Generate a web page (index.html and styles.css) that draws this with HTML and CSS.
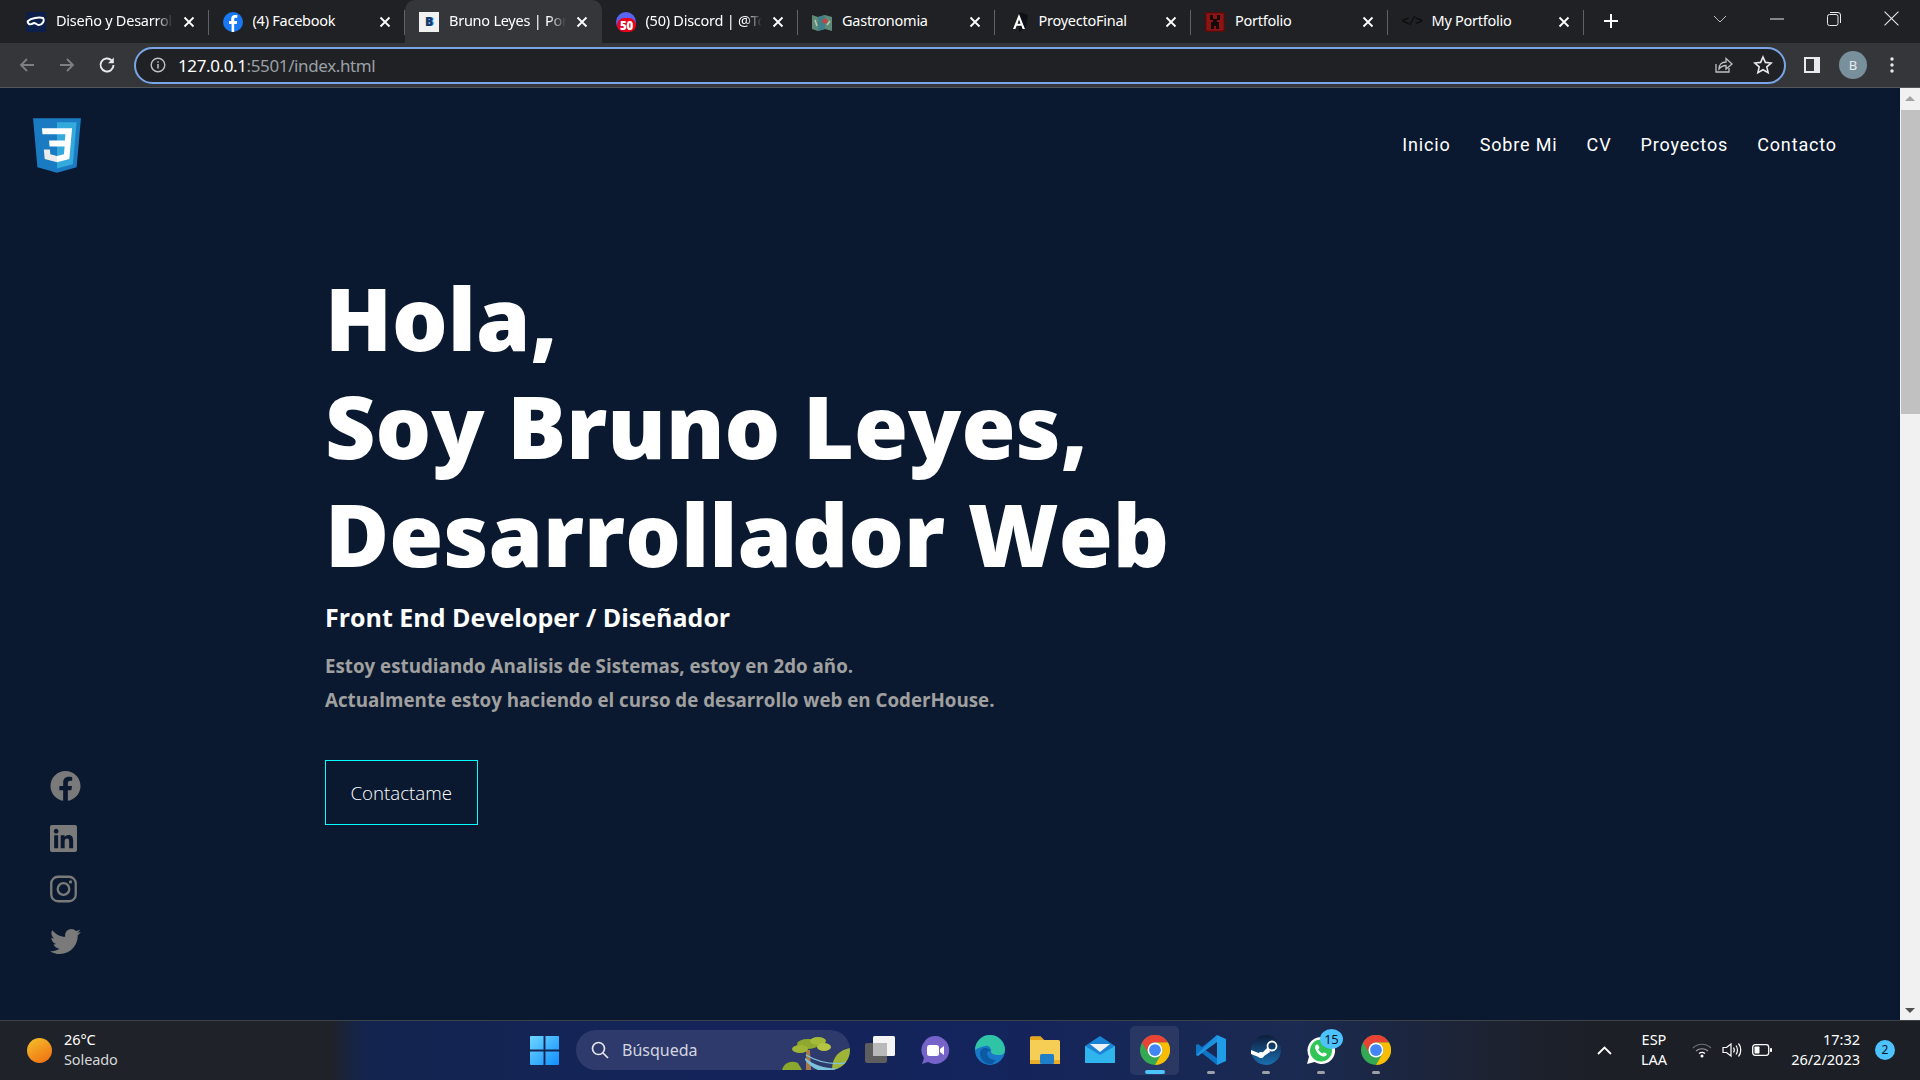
FILE: index.html
```html
<!DOCTYPE html>
<html lang="es">
<head>
<meta charset="utf-8">
<title>Bruno Leyes | Portfolio</title>
<link rel="stylesheet" href="styles.css">
</head>
<body>
<svg class="defs" width="0" height="0" aria-hidden="true">
  <symbol id="x" viewBox="0 0 12 12"><path d="M1.5 1.5l9 9M10.5 1.5l-9 9" stroke="#fff" stroke-width="1.8" fill="none"/></symbol>
  <symbol id="chrome" viewBox="0 0 48 48">
    <circle cx="24" cy="24" r="24" fill="#34a853"/>
    <path d="M3.2 12A24 24 0 0 1 44.8 12H24a12 12 0 0 0-10.4 18z" fill="#ea4335"/>
    <path d="M44.8 12H24a12 12 0 0 1 10.4 18L24 48A24 24 0 0 0 44.8 12z" fill="#fbbc04"/>
    <circle cx="24" cy="24" r="12" fill="#fff"/><circle cx="24" cy="24" r="9.4" fill="#4285f4"/>
  </symbol>
</svg>

<div class="tabstrip">
  <div class="tab">
    <svg class="fav" viewBox="0 0 20 20"><rect width="20" height="20" fill="#0c1f4a"/><path d="M2 9c3-3 11-4 15-3 2 3-1 7-4 7-2 0-3-2-5-2-2 1-4 2-5 1-1-1-2-2-1-3z" fill="none" stroke="#fff" stroke-width="2"/></svg>
    <span class="tab-title fade">Diseño y Desarrollo Web</span>
    <svg class="tab-x"><use href="#x"/></svg>
  </div>
  <div class="tab">
    <svg class="fav" viewBox="0 0 20 20"><circle cx="10" cy="10" r="10" fill="#1877f2"/><path d="M11.2 20v-8h2.6l.4-3h-3V7.3c0-.9.3-1.5 1.500-1.500h1.600V3.100c-.3 0-1.200-.1-2.300-.1-2.300 0-3.800 1.400-3.800 3.900V9H6v3h2.600v8z" fill="#fff"/></svg>
    <span class="tab-title">(4) Facebook</span>
    <svg class="tab-x"><use href="#x"/></svg>
  </div>
  <div class="tab active">
    <span class="fav fav-b">B</span>
    <span class="tab-title fade">Bruno Leyes | Portfolio</span>
    <svg class="tab-x"><use href="#x"/></svg>
  </div>
  <div class="tab">
    <svg class="fav" viewBox="0 0 20 20"><circle cx="10" cy="10" r="10" fill="#5865f2"/><rect x="1" y="6" width="19" height="14" rx="7" fill="#e8001c"/><text x="10.500" y="17.500" class="fav-num">50</text></svg>
    <span class="tab-title fade">(50) Discord | @Tomas</span>
    <svg class="tab-x"><use href="#x"/></svg>
  </div>
  <div class="tab">
    <svg class="fav" viewBox="0 0 20 20"><path d="M0 3l6 2 7-2 7 2v14l-7-2-7 2-6-2z" fill="#5e8a7a"/><path d="M6 5l7-2v14l-7 2z" fill="#3f7f8a"/><circle cx="13" cy="9" r="2.500" fill="#c8433f"/><path d="M3 8l2 6M15 13l3-4" stroke="#b9c6b0" stroke-width="1.500"/></svg>
    <span class="tab-title">Gastronomia</span>
    <svg class="tab-x"><use href="#x"/></svg>
  </div>
  <div class="tab">
    <svg class="fav" viewBox="0 0 20 20"><path d="M10 0l9 3-2 13-7 4z" fill="#0d1016"/><path d="M10 2l-6 15h2.400l1.200-3.200h4.800l1.200 3.200H16zM8.500 11.700L10 7.500l1.500 4.200z" fill="#fff"/></svg>
    <span class="tab-title">ProyectoFinal</span>
    <svg class="tab-x"><use href="#x"/></svg>
  </div>
  <div class="tab">
    <svg class="fav" viewBox="0 0 20 20"><rect width="20" height="20" fill="#8e1414"/><rect x=".8" y=".8" width="18.400" height="18.400" fill="none" stroke="#3a0a0a"/><path d="M5 3h3v4h4V3h3v5h-3v2h2v7h-3v-3H9v3H6v-7h2V8H5z" fill="#14090a"/></svg>
    <span class="tab-title">Portfolio</span>
    <svg class="tab-x"><use href="#x"/></svg>
  </div>
  <div class="tab last">
    <span class="fav fav-code">&lt;/&gt;</span>
    <span class="tab-title">My Portfolio</span>
    <svg class="tab-x"><use href="#x"/></svg>
  </div>
  <svg class="newtab" viewBox="0 0 16 16"><path d="M8 1v14M1 8h14" stroke="#fff" stroke-width="2"/></svg>
  <div class="winctl">
    <svg class="ctl-chev" viewBox="0 0 14 8"><path d="M1 1l6 6 6-6" fill="none" stroke="#bdc1c6"/></svg>
    <svg class="ctl-min" viewBox="0 0 14 2"><path d="M0 1h14" stroke="#e8eaed"/></svg>
    <svg class="ctl-res" viewBox="0 0 14 14"><rect x=".5" y="2.500" width="10.500" height="11" rx="2" fill="none" stroke="#e8eaed"/><path d="M3 .5h8a2.500 2.500 0 0 1 2.500 2.500v8" fill="none" stroke="#e8eaed"/></svg>
    <svg class="ctl-close" viewBox="0 0 14 14"><path d="M.5.5l13 13M13.500.5l-13 13" stroke="#e8eaed"/></svg>
  </div>
</div>

<div class="toolbar">
  <svg class="tb-ic" viewBox="0 0 18 18"><path d="M16 9H3M9 3L3 9l6 6" fill="none" stroke="#7c7f83" stroke-width="1.800"/></svg>
  <svg class="tb-ic" viewBox="0 0 18 18"><path d="M2 9h13M9 3l6 6-6 6" fill="none" stroke="#7c7f83" stroke-width="1.800"/></svg>
  <svg class="tb-ic" viewBox="0 0 18 18"><path d="M15.500 9A6.500 6.500 0 1 1 13.600 4.400" fill="none" stroke="#e8eaed" stroke-width="1.900"/><path d="M15.800 1.500v5.800H10z" fill="#e8eaed"/></svg>
  <div class="omnibox">
    <svg class="info" viewBox="0 0 16 16"><circle cx="8" cy="8" r="6.800" fill="none" stroke="#bdc1c6" stroke-width="1.400"/><path d="M8 7v4.500M8 4.300v1.400" stroke="#bdc1c6" stroke-width="1.500"/></svg>
    <span class="url"><span class="url-host">127.0.0.1</span>:5501/index.html</span>
    <svg class="omni-ic" viewBox="0 0 20 20"><path d="M3 9v8h13v-4" fill="none" stroke="#bdc1c6" stroke-width="1.300"/><path d="M6 14c0-5 3-7 7-7V3.500L19 9l-6 5v-3.500c-3 0-5 1-7 3.500z" fill="none" stroke="#bdc1c6" stroke-width="1.300"/></svg>
    <svg class="omni-ic" viewBox="0 0 20 20"><path d="M10 2l2.400 5.400 5.800.6-4.400 3.900 1.300 5.700L10 14.700l-5.100 2.900 1.300-5.700L1.800 8l5.800-.6z" fill="none" stroke="#e8eaed" stroke-width="1.600"/></svg>
  </div>
  <svg class="panel" viewBox="0 0 18 18"><rect x="1" y="1" width="16" height="16" fill="#e8eaed"/><rect x="3" y="3" width="8" height="12" fill="#35363a"/></svg>
  <span class="avatar">B</span>
  <svg class="kebab" viewBox="0 0 4 16"><circle cx="2" cy="2" r="1.700" fill="#e8eaed"/><circle cx="2" cy="8" r="1.700" fill="#e8eaed"/><circle cx="2" cy="14" r="1.700" fill="#e8eaed"/></svg>
</div>

<div class="viewport">
  <main class="page">
    <header class="site-header">
      <svg class="logo" viewBox="30 0 452 512">
        <polygon fill="#1a7bc2" points="71.357,460.819 30.272,0 481.728,0 440.643,460.74 255.724,512"/>
        <polygon fill="#33A9DC" points="256,472.816 405.419,431.396 440.574,37.584 256,37.584"/>
        <polygon fill="#fff" points="114.25,94.42 256,94.42 256,150.948 119.300,150.948"/>
        <polygon fill="#fff" points="181.2,208.832 256,208.832 256,265.36 186.300,265.36"/>
        <polygon fill="#EBEBEB" points="256.288,355.592 256.04,355.66 193.1,338.664 189.076,293.588 158.492,293.588 132.344,293.588 140.26,382.328 256.028,414.468 256.288,414.396"/>
        <polygon fill="#fff" points="327.876,265.36 321.316,338.628 256.276,355.58 256.276,414.392 372.14,382.328 386.072,226.688 387.436,211.412 397.632,94.42 256,94.42 256,150.948 335.58,150.948 330.4,208.832 256,208.832 256,265.36"/>
      </svg>
      <nav class="nav">
        <a>Inicio</a><a>Sobre Mi</a><a>CV</a><a>Proyectos</a><a>Contacto</a>
      </nav>
    </header>

    <section class="hero">
      <h1>Hola,<br>Soy Bruno Leyes,<br>Desarrollador Web</h1>
      <h3>Front End Developer / Diseñador</h3>
      <p>Estoy estudiando Analisis de Sistemas, estoy en 2do año.<br>Actualmente estoy haciendo el curso de desarrollo web en CoderHouse.</p>
      <a class="cta">Contactame</a>
    </section>

    <aside class="socials">
      <svg class="s-fb" viewBox="8 8 496 496"><path fill="#7a7a7a" d="M504 256C504 119 393 8 256 8S8 119 8 256c0 123.780 90.690 226.380 209.250 245V327.690h-63V256h63v-54.640c0-62.150 37-96.480 93.670-96.480 27.140 0 55.520 4.840 55.520 4.840v61h-31.280c-30.800 0-40.410 19.120-40.410 38.730V256h68.780l-11 71.690h-57.780V501C413.310 482.380 504 379.780 504 256z"/></svg>
      <svg class="s-in" viewBox="0 32 448 448"><path fill="#7a7a7a" d="M416 32H31.900C14.300 32 0 46.500 0 64.300v383.400C0 465.500 14.300 480 31.900 480H416c17.600 0 32-14.500 32-32.300V64.300c0-17.800-14.400-32.300-32-32.300zM135.400 416H69V202.200h66.500V416zm-33.200-243c-21.300 0-38.500-17.300-38.500-38.500S80.900 96 102.200 96c21.200 0 38.500 17.300 38.500 38.500 0 21.300-17.200 38.500-38.500 38.500zm282.100 243h-66.400V312c0-24.800-.5-56.700-34.500-56.700-34.600 0-39.900 27-39.900 54.900V416h-66.400V202.200h63.700v29.200h.9c8.900-16.800 30.600-34.500 62.900-34.500 67.200 0 79.700 44.300 79.700 101.900V416z"/></svg>
      <svg class="s-ig" viewBox="0 0 28 28"><rect x="1.300" y="1.300" width="25.400" height="25.400" rx="7" fill="none" stroke="#7a7a7a" stroke-width="2.400"/><circle cx="14" cy="14" r="6" fill="none" stroke="#7a7a7a" stroke-width="2.400"/><circle cx="21.300" cy="6.700" r="1.700" fill="#7a7a7a"/></svg>
      <svg class="s-tw" viewBox="0 48 512 416"><path fill="#7a7a7a" d="M459.370 151.716c.325 4.548.325 9.097.325 13.645 0 138.720-105.583 298.558-298.558 298.558-59.452 0-114.680-17.219-161.137-47.106 8.447.974 16.568 1.299 25.340 1.299 49.055 0 94.213-16.568 130.274-44.832-46.132-.975-84.792-31.188-98.112-72.772 6.498.974 12.995 1.624 19.818 1.624 9.421 0 18.843-1.300 27.614-3.573-48.081-9.747-84.143-51.980-84.143-102.985v-1.299c13.969 7.797 30.214 12.670 47.431 13.319-28.264-18.843-46.781-51.005-46.781-87.391 0-19.492 5.197-37.360 14.294-52.954 51.655 63.675 129.300 105.258 216.365 109.807-1.624-7.797-2.599-15.918-2.599-24.040 0-57.828 46.782-104.934 104.934-104.934 30.213 0 57.502 12.670 76.670 33.137 23.715-4.548 46.456-13.320 66.599-25.340-7.798 24.366-24.366 44.833-46.132 57.827 21.117-2.273 41.584-8.122 60.426-16.243-14.292 20.791-32.161 39.308-52.628 54.253z"/></svg>
    </aside>
  </main>
  <div class="scrollbar">
    <div class="sb-btn"><span class="arrow-up"></span></div>
    <div class="sb-track"><div class="sb-thumb"></div></div>
    <div class="sb-btn"><span class="arrow-down"></span></div>
  </div>
</div>

<footer class="taskbar">
  <div class="weather">
    <span class="sun"></span>
    <div class="weather-text"><span>26°C</span><span class="dim">Soleado</span></div>
  </div>
  <div class="apps">
    <svg class="start" viewBox="0 0 30 30"><defs><linearGradient id="w" x1="0" y1="0" x2="1" y2="1"><stop offset="0" stop-color="#6fd6ff"/><stop offset="1" stop-color="#0f8fff"/></linearGradient></defs><path fill="url(#w)" d="M0 1a1 1 0 0 1 1-1h13v14H0zM16 0h13a1 1 0 0 1 1 1v13H16zM0 16h14v14H1a1 1 0 0 1-1-1zM16 16h14v13a1 1 0 0 1-1 1H16z"/></svg>
    <div class="search">
      <svg class="search-ic" viewBox="0 0 18 18"><circle cx="7.500" cy="7.500" r="6" fill="none" stroke="#e4e6ee" stroke-width="1.700"/><path d="M12 12l5 5" stroke="#e4e6ee" stroke-width="1.700"/></svg>
      <span class="search-text">Búsqueda</span>
      <svg class="search-art" viewBox="0 0 68 34">
        <path d="M0 34c2-8 10-10 16-7l4 7z" fill="#8aa72e"/><path d="M50 34c0-14 8-20 18-22v22z" fill="#9db438"/>
        <path d="M24 14h4l1 20h-5z" fill="#a6794f"/>
        <ellipse cx="26" cy="8" rx="11" ry="5" fill="#8fa82f"/><ellipse cx="36" cy="5" rx="8" ry="4" fill="#a6ba3a"/><ellipse cx="42" cy="11" rx="7" ry="4" fill="#b6c443"/><ellipse cx="18" cy="13" rx="8" ry="4" fill="#a0b535"/>
        <path d="M23 22c10 8 24 12 40 10v2H36c-5-2-10-6-13-10z" fill="#7ec3dc"/><path d="M24 19c10 6 24 10 40 8" fill="none" stroke="#7ec3dc" stroke-width="1.300"/>
      </svg>
    </div>
    <svg class="app" viewBox="0 0 30 30"><rect x="0" y="8" width="22" height="20" rx="2" fill="#5e5e5e"/><rect x="8" y="1" width="22" height="20" rx="1.500" fill="#f4f4f4"/><rect x="8" y="8" width="14" height="13" fill="#b9b9b9"/></svg>
    <svg class="app" viewBox="0 0 30 30"><path d="M15 1a14 14 0 1 1-7 26l-6 2 2-6A14 14 0 0 1 15 1z" fill="#7563c9"/><rect x="7" y="10" width="12" height="11" rx="2.500" fill="#fff"/><path d="M20 14l4-3v9l-4-3z" fill="#fff"/></svg>
    <svg class="app" viewBox="0 0 30 30"><circle cx="15" cy="15" r="15" fill="#1a78c9"/><path d="M0 15A15 15 0 0 1 30 15c0 3-2 5-6 5-5 0-8-1-8-4 0-4-3-6-6-5-4 1-8 2-10 4z" fill="#2fc4a6"/><path d="M12 18c0 5 5 7 9 7l-4 4C10 30 5 24 5 18c0-3 3-5 5-5 3 0 6 2 6 3-2 0-4 0-4 2z" fill="#0c59a4"/></svg>
    <svg class="app" viewBox="0 0 30 30"><path d="M0 3a1.500 1.500 0 0 1 1.500-1.500h9L14 5h14.500A1.500 1.500 0 0 1 30 6.500V28a1 1 0 0 1-1 1H1a1 1 0 0 1-1-1z" fill="#f6ce55"/><path d="M0 3a1.500 1.500 0 0 1 1.500-1.500h9L14 5H0z" fill="#e5a51c"/><rect x="0" y="25" width="30" height="4" fill="#e8ad2a"/><rect x="10" y="19" width="14" height="10" rx="1.500" fill="#1f7fc9"/></svg>
    <svg class="app" viewBox="0 0 30 30"><path d="M0 11L15 1l15 10v17H0z" fill="#1a83d6"/><path d="M0 11l15 9 15-9v17H0z" fill="#2fb4ee"/><path d="M5 9h20l-10 8z" fill="#eef2f6"/></svg>
    <div class="app-active">
      <svg class="app"><use href="#chrome"/></svg>
      <span class="run-bar"></span>
    </div>
    <div class="app-slot">
      <svg class="app" viewBox="0 0 30 30"><path d="M21 0l9 4v22l-9 4z" fill="#1f9be8"/><path d="M21 0v7L9.500 15 21 23v7L6 18l-4 3-2-1v-10l2-1 4 3z" fill="#0e74c5"/><path d="M21 7L2 21 0 20l21-20z" fill="#2aa3ef" opacity=".6"/></svg>
      <span class="run-dot"></span>
    </div>
    <div class="app-slot">
      <svg class="app" viewBox="0 0 30 30"><defs><linearGradient id="st" x1="0" y1="0" x2="0" y2="1"><stop offset="0" stop-color="#0e1c3a"/><stop offset="1" stop-color="#1a6fb0"/></linearGradient></defs><circle cx="15" cy="15" r="15" fill="url(#st)"/><circle cx="21" cy="11" r="4.500" fill="none" stroke="#fff" stroke-width="1.800"/><circle cx="10" cy="20" r="3" fill="#fff"/><path d="M0 15l10 4 7-7 2 5-9 6-10-4z" fill="#fff"/></svg>
      <span class="run-dot"></span>
    </div>
    <div class="app-slot">
      <svg class="app" viewBox="0 0 30 30"><path d="M15 2a13.500 13.500 0 1 1-6.500 25L1 29l2-7.300A13.500 13.500 0 0 1 15 2z" fill="#fff"/><circle cx="15" cy="15.500" r="11" fill="#31c557"/><path d="M10.500 9.500c-1.500 1-2 3-.5 6 1.500 3 4.500 5.500 7 6 2 .4 3.500-1 4-2.500l-3-1.800-1.500 1.400c-2-.8-3.500-2.500-4.300-4.300l1.400-1.400-1.500-3.200z" fill="#fff"/></svg>
      <span class="badge-15">15</span>
      <span class="run-dot"></span>
    </div>
    <div class="app-slot">
      <svg class="app"><use href="#chrome"/></svg>
      <span class="run-dot"></span>
    </div>
  </div>
  <div class="tray">
    <svg class="tray-chev" viewBox="0 0 15 9"><path d="M1 8l6.500-6.500L14 8" fill="none" stroke="#fff" stroke-width="1.800"/></svg>
    <div class="lang"><span>ESP</span><span>LAA</span></div>
    <svg class="tray-ic" viewBox="0 0 20 16"><path d="M1 6c5-5 13-5 18 0" fill="none" stroke="#6d7076" stroke-width="1.200"/><path d="M4 9c3.500-3 8.500-3 12 0" fill="none" stroke="#9a9da3" stroke-width="1.200"/><path d="M7 11.500c2-1.500 4-1.500 6 0" fill="none" stroke="#fff" stroke-width="1.400"/><circle cx="10" cy="14" r="1.500" fill="#fff"/></svg>
    <svg class="tray-ic" viewBox="0 0 20 16"><path d="M1 5.500h3.500L9 2v12L4.500 10.500H1z" fill="none" stroke="#fff" stroke-width="1.200"/><path d="M11.500 5.500c1 1.500 1 3.500 0 5M14 3.500c2 2.500 2 6.500 0 9M16.500 1.500c3 3.500 3 9.500 0 13" fill="none" stroke="#fff" stroke-width="1.200"/></svg>
    <svg class="tray-ic" viewBox="0 0 20 14"><rect x=".7" y="1.700" width="16" height="10.600" rx="2.500" fill="none" stroke="#fff" stroke-width="1.300"/><rect x="2.500" y="3.500" width="5" height="7" rx=".8" fill="#fff"/><rect x="18" y="5" width="2" height="4" rx=".8" fill="#fff"/></svg>
    <div class="clock"><span>17:32</span><span>26/2/2023</span></div>
    <span class="notif">2</span>
  </div>
</footer>
</body>
</html>
```

FILE: styles.css
```css
* { box-sizing: border-box; }
html, body { margin: 0; height: 100%; }
body {
  width: 1920px; height: 1080px; overflow: hidden;
  display: flex; flex-direction: column;
  background: #0a192f;
  font-family: "Open Sans", "Noto Sans", sans-serif;
}
.defs { position: absolute; }

/* Browser tabs */
.tabstrip { height: 43px; flex: none; display: flex; align-items: stretch; padding-left: 12px; background: #202124; color: #fff; }
.tab { width: 196.5px; height: 43px; display: flex; align-items: center; padding: 0 14px 4px 14px; position: relative; font: 14.5px "Noto Sans", sans-serif; letter-spacing: -.25px; }
.tab::after { content: ""; position: absolute; right: 0; top: 10px; height: 25px; width: 1px; background: #5f6368; }
.tab.active { background: #35363a; border-radius: 10px 10px 0 0; }
.tab.active::after { display: none; }
.tab .fav { position: relative; top: 2px; }
.fav { width: 20px; height: 20px; flex: none; margin-right: 10px; }
.fav-b { background: #f1f1f1; color: #14396b; font: 800 12px/20px "Open Sans", sans-serif; text-align: center; letter-spacing: 0; text-shadow: 1px 0 0 #3f8fd0; }
.fav-code { color: #0c0c0c; font: 700 13px/20px "Liberation Mono", monospace; letter-spacing: -1px; text-align: center; }
.fav-num { font: 800 11.5px "Open Sans", sans-serif; fill: #fff; text-anchor: middle; letter-spacing: -.3px; }
.tab-title { flex: 1; min-width: 0; white-space: nowrap; overflow: hidden; }
.fade { -webkit-mask-image: linear-gradient(to right, #000 85%, transparent); mask-image: linear-gradient(to right, #000 85%, transparent); }
.tab-x { width: 12px; height: 12px; flex: none; margin-left: 10px; position: relative; top: 2px; }
.newtab { width: 16px; height: 16px; margin: 13px 0 0 19px; flex: none; }
.winctl { flex: 1; position: relative; display: flex; align-items: flex-start; padding-left: 94px; }
.ctl-chev { width: 14px; height: 8px; margin-top: 15px; }
.ctl-min { width: 14px; height: 2px; margin: 18px 0 0 43px; }
.ctl-res { width: 14px; height: 14px; margin: 12px 0 0 43px; }
.ctl-close { width: 15px; height: 15px; margin: 11px 0 0 43px; }

/* Toolbar */
.toolbar { height: 45px; flex: none; display: flex; align-items: center; background: #35363a; border-bottom: 1px solid #55565a; padding-left: 18px; }
.tb-ic { width: 18px; height: 18px; margin-right: 22px; flex: none; }
.omnibox { width: 1652px; height: 37px; margin-left: -4px; flex: none; display: flex; align-items: center; background: #202124; border: 2.500px solid #7aa5e8; border-radius: 19px; padding-left: 14px; padding-right: 11px; }
.info { width: 16px; height: 16px; flex: none; }
.url { margin-left: 12px; flex: 1; font: 17px "Noto Sans", sans-serif; letter-spacing: -.38px; color: #9aa0a6; }
.url-host { color: #fff; }
.omni-ic { width: 20px; height: 20px; margin-left: 20px; flex: none; }
.panel { width: 18px; height: 18px; margin-left: 17px; flex: none; }
.avatar { width: 28px; height: 28px; margin-left: 18px; border-radius: 50%; background: #78909c; color: #e8eaed; font: 13px/28px "Noto Sans", sans-serif; text-align: center; flex: none; }
.kebab { width: 4px; height: 16px; margin-left: 23px; flex: none; }

/* Page */
.viewport { flex: 1; display: flex; min-height: 0; }
.page { flex: 1; position: relative; background: #0a192f; color: #fff; }
.site-header { display: flex; justify-content: space-between; align-items: center; padding: 30px 63px 0 33px; }
.logo { width: 48px; height: 55px; }
.nav { display: flex; gap: 29px; font: 400 18px "Roboto", sans-serif; letter-spacing: .85px; position: relative; top: -1px; }
.hero { padding: 90px 0 0 325px; }
.hero h1 { margin: 0; font: 800 87.5px/108px "Open Sans", sans-serif; }
.hero h3 { margin: 9px 0 0; font: 700 25px/42px "Open Sans", sans-serif; }
.hero p { margin: 11px 0 0; font: 700 18.75px/34px "Open Sans", sans-serif; color: #a0a0a0; }
.cta { display: inline-block; margin-top: 43px; padding: 0 24.5px; height: 65px; border: 1px solid #0ff; font: 300 18.7px/63px "Open Sans", sans-serif; color: #fff; }
.socials { position: absolute; left: 50px; top: 683px; width: 31px; display: flex; flex-direction: column; align-items: flex-start; }
.s-fb { width: 31px; height: 30px; }
.s-in { width: 27px; height: 27px; margin-top: 24px; }
.s-ig { width: 27px; height: 28px; margin-top: 23px; }
.s-tw { width: 31px; height: 25px; margin-top: 26px; }

/* Scrollbar */
.scrollbar { width: 20px; flex: none; background: #f1f1f1; display: flex; flex-direction: column; }
.sb-btn { height: 20px; display: flex; align-items: center; justify-content: center; flex: none; }
.arrow-up { border: 5px solid transparent; border-top: 0; border-bottom: 5px solid #a3a3a3; }
.arrow-down { border: 5px solid transparent; border-bottom: 0; border-top: 5px solid #505050; }
.sb-track { flex: 1; padding-left: 1px; }
.sb-thumb { height: 304px; margin-top: 2px; background: #c1c1c1; }

/* Taskbar */
.taskbar {
  height: 60px; flex: none; display: flex; align-items: center; color: #fff; padding-bottom: 1px;
  border-top: 1px solid #3d4148;
  background: linear-gradient(to right, #1f2228 0, #1f2228 330px, #13244f 365px, #14245a 700px, #14245c 1000px, #1a2a50 1300px, #1d2230 1500px, #1c1f26 1600px);
}
.weather { width: 530px; flex: none; padding-left: 27px; display: flex; align-items: center; }
.sun { width: 25px; height: 25px; border-radius: 50%; background: linear-gradient(150deg, #f4c22c, #f06a10); }
.weather-text { margin-left: 12px; display: flex; flex-direction: column; font: 14.5px/20px "Noto Sans", sans-serif; letter-spacing: -.1px; position: relative; top: -1px; }
.dim { color: #d5d7da; }
.apps { display: flex; align-items: center; }
.start { width: 29px; height: 29px; margin-right: 17px; }
.search { width: 274px; height: 40px; border-radius: 20px; background: #2e3a6b; display: flex; align-items: center; padding-left: 15px; position: relative; overflow: hidden; margin-right: 15px; }
.search-ic { width: 18px; height: 18px; }
.search-text { margin-left: 13px; font: 16px "Noto Sans", sans-serif; color: #d4d6e0; }
.search-art { position: absolute; right: 0; bottom: 0; width: 68px; height: 34px; }
.apps > .app { margin-right: 25.100px; }
.app { width: 30px; height: 30px; display: block; flex: none; }
.app-slot { position: relative; width: 30px; margin-right: 25.100px; }
.app-active { position: relative; width: 30px; margin-right: 25.100px; }
.app-active::before { content: ""; position: absolute; left: -10px; top: -9px; width: 49px; height: 49px; border-radius: 5px; background: rgba(255,255,255,.08); }
.app-active .app { position: relative; }
.run-bar { position: absolute; left: 5px; top: 35px; width: 20px; height: 4px; border-radius: 2px; background: #4cc2ff; }
.run-dot { position: absolute; left: 11px; top: 36px; width: 8px; height: 3px; border-radius: 2px; background: #9da0a8; }
.badge-15 { position: absolute; left: 14px; top: -6px; width: 23px; height: 20px; border-radius: 50%; background: #4cc2ff; color: #10141c; font: 13px/20px "Noto Sans", sans-serif; text-align: center; letter-spacing: -.4px; }
.tray { margin-left: auto; display: flex; align-items: center; padding-right: 25px; }
.tray-chev { width: 15px; height: 9px; margin-right: 28px; }
.lang { width: 28px; display: flex; flex-direction: column; align-items: center; font: 14.5px/20px "Noto Sans", sans-serif; margin-right: 24px; position: relative; top: -1px; }
.tray-ic { width: 20px; height: 16px; margin-right: 10px; }
.clock { width: 68px; margin-left: 10px; display: flex; flex-direction: column; align-items: flex-end; font: 14.5px/20px "Noto Sans", sans-serif; white-space: nowrap; position: relative; top: -1px; }
.notif { width: 20px; height: 20px; margin-left: 15px; border-radius: 50%; background: #4cc2ff; color: #10141c; font: 12px/20px "Noto Sans", sans-serif; text-align: center; }
```
